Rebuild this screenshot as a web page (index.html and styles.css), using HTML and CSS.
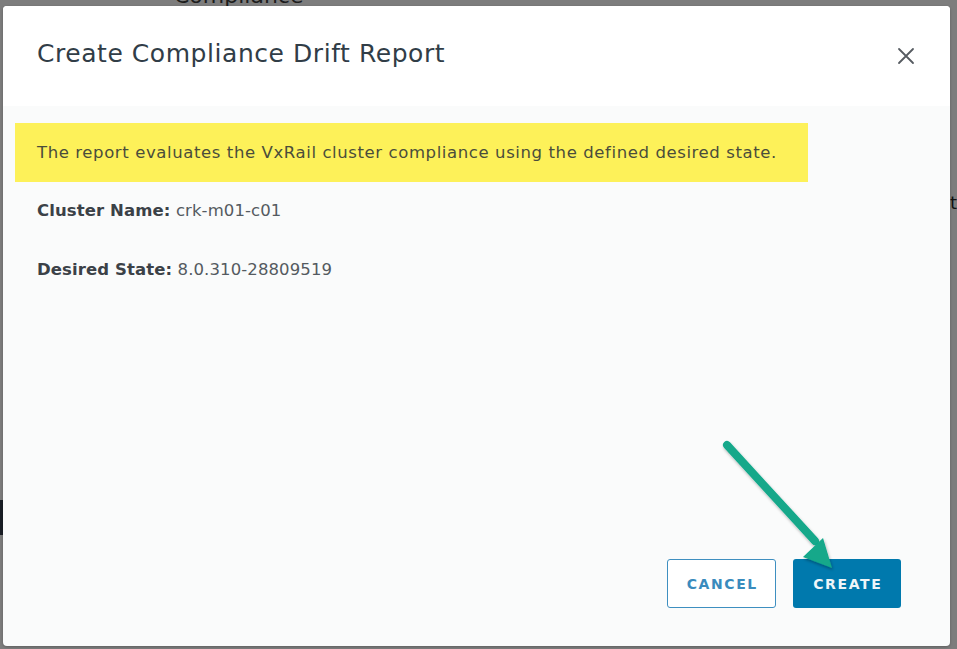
FILE: index.html
```html
<!DOCTYPE html>
<html>
<head>
<meta charset="utf-8">
<link rel="stylesheet" href="styles.css">
</head>
<body>
<div class="backdrop">
  <div class="bg-title">Compliance</div>
  <div class="bg-right">t</div>
  <div class="bg-left"></div>
</div>
<div class="modal">
  <div class="modal-header">
    <h1 class="modal-title">Create Compliance Drift Report</h1>
    <button class="close" aria-label="Close">
      <svg width="18" height="18" viewBox="0 0 18 18"><path d="M2 2 L16 16 M16 2 L2 16" stroke="#565b61" stroke-width="1.8" stroke-linecap="round" fill="none"/></svg>
    </button>
  </div>
  <div class="modal-body">
    <div class="highlight">The report evaluates the VxRail cluster compliance using the defined desired state.</div>
    <p class="row"><b>Cluster Name:</b> crk-m01-c01</p>
    <p class="row"><b>Desired State:</b> 8.0.310-28809519</p>
    <div class="spacer"></div>
    <div class="footer">
      <button class="btn btn-outline">CANCEL</button>
      <button class="btn btn-primary">CREATE</button>
    </div>
  </div>
</div>
<svg class="arrow" width="957" height="649" viewBox="0 0 957 649">
  <defs>
    <filter id="sh" x="-20%" y="-20%" width="140%" height="140%">
      <feDropShadow dx="1" dy="2" stdDeviation="1.5" flood-color="#000" flood-opacity="0.3"/>
    </filter>
  </defs>
  <g filter="url(#sh)">
    <line x1="727" y1="445" x2="815" y2="541" stroke="#12a88a" stroke-width="8" stroke-linecap="round"/>
    <polygon points="832,568 803,557 823,538" fill="#12a88a"/>
  </g>
</svg>
</body>
</html>
```
FILE: styles.css
```css
* { box-sizing: border-box; }
html, body { margin: 0; padding: 0; }
body {
  width: 957px;
  height: 649px;
  background: #7d7d7d;
  font-family: "DejaVu Sans", "Open Sans", sans-serif;
  overflow: hidden;
  position: relative;
}
.backdrop { height: 649px; position: relative; }
.bg-title {
  position: absolute;
  left: 174px;
  top: -17px;
  font-size: 22px;
  color: #1d1d1d;
}
.bg-right {
  position: absolute;
  left: 950px;
  top: 192px;
  font-size: 18px;
  color: #111;
}
.bg-left {
  position: absolute;
  left: 0;
  top: 500px;
  width: 3px;
  height: 35px;
  background: #1a1f26;
}
.modal {
  position: absolute;
  left: 3px;
  top: 6px;
  width: 947px;
  height: 640px;
  border-radius: 4px;
  overflow: hidden;
  display: flex;
  flex-direction: column;
  background: #fafbfb;
  box-shadow: 0 1px 3px rgba(0,0,0,0.25);
}
.modal-header {
  height: 100px;
  background: #ffffff;
  display: flex;
  align-items: flex-start;
  justify-content: space-between;
  padding: 33px 35px 0 34px;
}
.modal-title {
  margin: 0;
  font-weight: 400;
  font-size: 25px;
  letter-spacing: 0.55px;
  line-height: 30px;
  color: #313d47;
}
.close {
  margin-top: 8px;
  border: 0;
  padding: 0;
  background: none;
  width: 18px;
  height: 18px;
  display: flex;
}
.modal-body {
  flex: 1;
  display: flex;
  flex-direction: column;
  padding: 17px 0 38px 12px;
}
.highlight {
  width: 793px;
  height: 59px;
  background: #fdf159;
  color: #4a4d3b;
  font-size: 16.5px;
  letter-spacing: 0.6px;
  line-height: 59px;
  padding-left: 22px;
}
.row {
  margin: 0;
  padding-left: 22px;
  font-size: 16.5px;
  letter-spacing: 0.1px;
  color: #545a60;
  line-height: 20px;
}
.row:nth-of-type(1) { margin-top: 19px; }
.row:nth-of-type(2) { margin-top: 39px; }
.row b { color: #3b4147; font-weight: 700; }
.spacer { flex: 1; }
.footer {
  display: flex;
  justify-content: flex-end;
  gap: 17px;
  padding-right: 49px;
}
.btn {
  height: 49px;
  border-radius: 3px;
  font-family: "DejaVu Sans", "Open Sans", sans-serif;
  font-weight: 700;
  font-size: 14px;
  letter-spacing: 1.6px;
  padding: 0 0 0 1.6px;
}
.btn-outline {
  width: 109px;
  background: #fff;
  border: 1px solid #3e8fc0;
  color: #3a8bbd;
}
.btn-primary {
  width: 108px;
  background: #0079ad;
  border: 0;
  color: #eef5f9;
}
.arrow {
  position: absolute;
  left: 0;
  top: 0;
  pointer-events: none;
}
```
